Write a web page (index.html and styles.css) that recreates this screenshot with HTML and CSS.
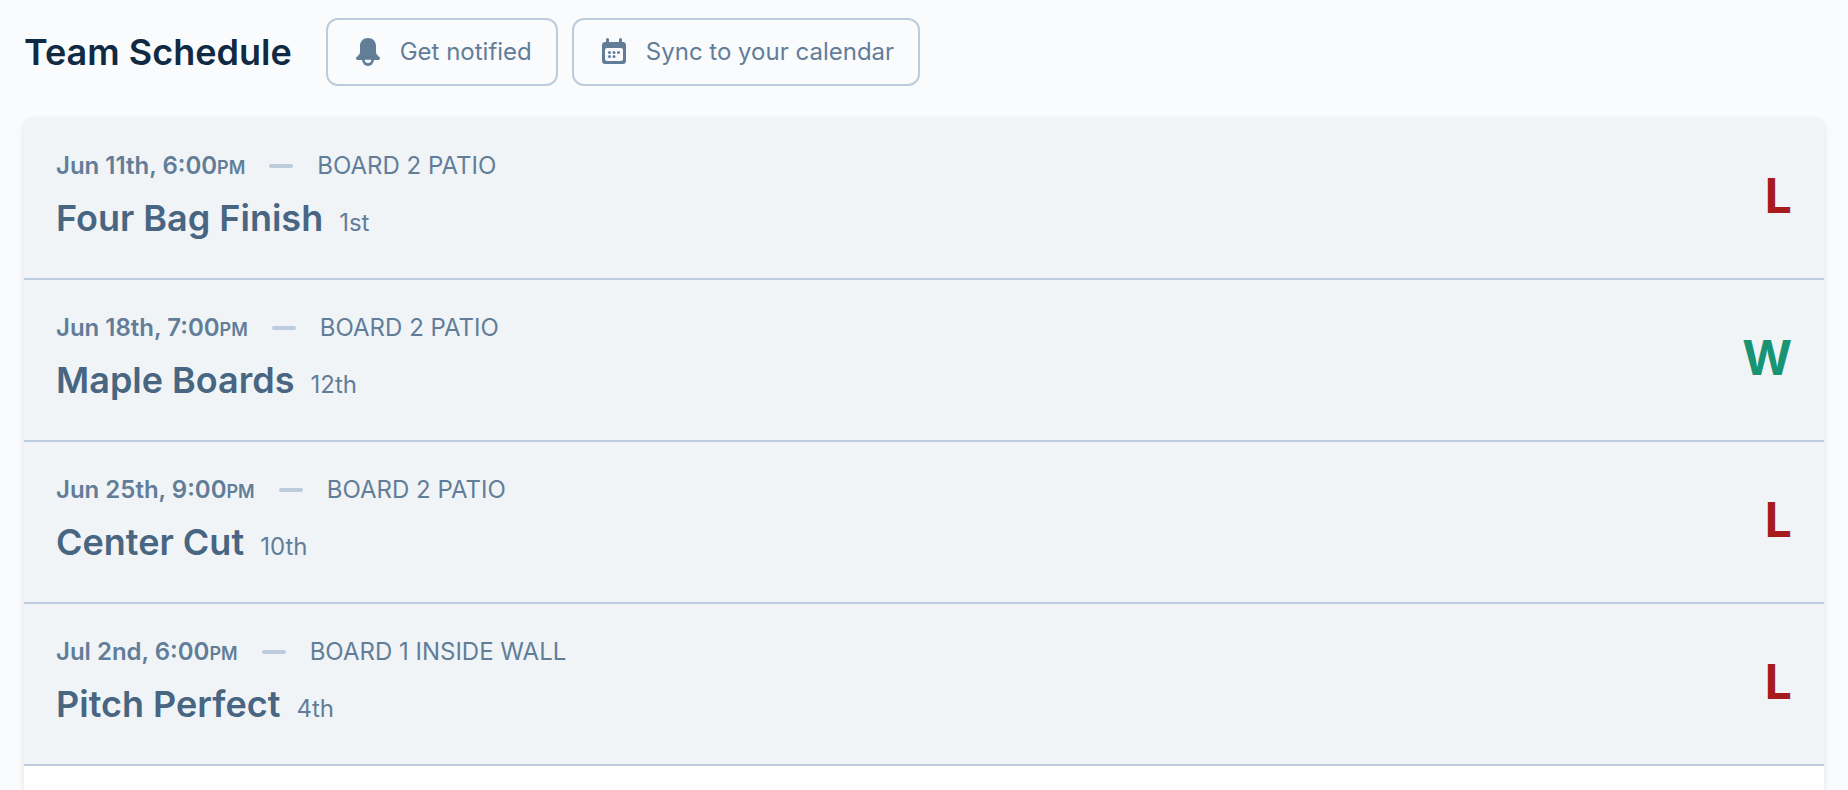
FILE: index.html
```html
<!DOCTYPE html>
<html lang="en">
<head>
    <meta charset="UTF-8">
    <meta name="viewport" content="width=device-width, initial-scale=1.0">
    <title>Team Schedule</title>
    <link rel="stylesheet" href="styles.css">
</head>
<body>
    <header class="schedule-header">
        <h1>Team Schedule</h1>
        <div class="actions">
            <button type="button" class="btn">
                <svg class="icon" viewBox="0 0 28 28" aria-hidden="true">
                    <path fill="currentColor" d="M14 0C9.300 0 6 3.400 6 8v5.500c0 1.900-.7 3-2.300 4.400C2.600 18.900 2 19.600 2 20.600 2 21.500 2.700 22 3.700 22h20.600c1 0 1.700-.5 1.700-1.400 0-1-.6-1.700-1.700-2.700C22.700 16.500 22 15.400 22 13.500V8c0-4.600-3.300-8-8-8z"/>
                    <circle fill="currentColor" cx="14" cy="22.200" r="5.800"/>
                    <path class="clapper" d="M10.700 21.800h6.600a3.300 3.300 0 0 1-6.600 0z"/>
                </svg>
                Get notified
            </button>
            <button type="button" class="btn">
                <svg class="icon" viewBox="0 0 28 28" aria-hidden="true">
                    <path fill="currentColor" fill-rule="evenodd" d="M6 1.500a1.500 1.500 0 0 1 3 0V4h10V1.500a1.500 1.500 0 0 1 3 0V4h1c1.700 0 3 1.300 3 3v16c0 1.700-1.300 3-3 3H5c-1.700 0-3-1.300-3-3V7c0-1.700 1.300-3 3-3h1zM7 10c-1.100 0-2 .9-2 2v9c0 1.100.9 2 2 2h14c1.100 0 2-.9 2-2v-9c0-1.100-.9-2-2-2z"/>
                    <g fill="currentColor">
                        <circle cx="9.500" cy="14.500" r="1.500"/>
                        <circle cx="14" cy="14.500" r="1.500"/>
                        <circle cx="18.500" cy="14.500" r="1.500"/>
                        <circle cx="9.500" cy="18.500" r="1.500"/>
                        <circle cx="14" cy="18.500" r="1.500"/>
                    </g>
                </svg>
                Sync to your calendar
            </button>
        </div>
    </header>

    <ul class="schedule">
        <li class="match">
            <div>
                <div class="match-info">
                    <span class="date">Jun 11th, 6:00<span class="ampm">PM</span></span>
                    <span class="dash"></span>
                    <span>BOARD 2 PATIO</span>
                </div>
                <div class="opponent">
                    <h2>Four Bag Finish</h2>
                    <span>1st</span>
                </div>
            </div>
            <span class="result loss">L</span>
        </li>
        <li class="match">
            <div>
                <div class="match-info">
                    <span class="date">Jun 18th, 7:00<span class="ampm">PM</span></span>
                    <span class="dash"></span>
                    <span>BOARD 2 PATIO</span>
                </div>
                <div class="opponent">
                    <h2>Maple Boards</h2>
                    <span>12th</span>
                </div>
            </div>
            <span class="result win">W</span>
        </li>
        <li class="match">
            <div>
                <div class="match-info">
                    <span class="date">Jun 25th, 9:00<span class="ampm">PM</span></span>
                    <span class="dash"></span>
                    <span>BOARD 2 PATIO</span>
                </div>
                <div class="opponent">
                    <h2>Center Cut</h2>
                    <span>10th</span>
                </div>
            </div>
            <span class="result loss">L</span>
        </li>
        <li class="match">
            <div>
                <div class="match-info">
                    <span class="date">Jul 2nd, 6:00<span class="ampm">PM</span></span>
                    <span class="dash"></span>
                    <span>BOARD 1 INSIDE WALL</span>
                </div>
                <div class="opponent">
                    <h2>Pitch Perfect</h2>
                    <span>4th</span>
                </div>
            </div>
            <span class="result loss">L</span>
        </li>
    </ul>
</body>
</html>
```

FILE: styles.css
```css
* {
    box-sizing: border-box;
}
body {
    display: flex;
    flex-direction: column;
    min-height: 100vh;
    margin: 0;
    padding: 18px 24px 0;
    background: #fafbfd;
    color: #627d98;
    font-family: Inter, "Liberation Sans", sans-serif;
    font-size: 24px;
    line-height: 32px;
}
h1, h2 {
    margin: 0;
    font-size: 36px;
    font-weight: 600;
    line-height: 48px;
}
h1 {
    color: #102a43;
}
h2 {
    color: #486581;
}
.schedule-header {
    display: flex;
    flex-wrap: wrap;
    align-items: center;
    gap: 34px;
    margin-bottom: 32px;
}
.actions {
    display: flex;
    flex-wrap: wrap;
    gap: 14px;
}
.btn {
    display: flex;
    align-items: center;
    gap: 18px;
    padding: 16px 24px 16px 26px;
    border: 2px solid #bcccdc;
    border-radius: 12px;
    background: #fafbfd;
    color: #627d98;
    font: inherit;
    cursor: pointer;
}
.icon {
    width: 28px;
    height: 28px;
}
.clapper {
    fill: #fafbfd;
}
.schedule {
    flex: 1;
    margin: 0;
    padding: 0;
    border-radius: 8px 8px 0 0;
    background: #fff;
    box-shadow: 0 2px 6px rgba(0, 0, 0, 0.1);
    list-style: none;
    overflow: hidden;
}
.match {
    display: flex;
    align-items: center;
    justify-content: space-between;
    padding: 32px 32px 36px;
    border-bottom: 2px solid #bcccdc;
    background: #f0f4f7;
}
.match-info {
    display: flex;
    align-items: center;
    gap: 24px;
    margin-bottom: 12px;
}
.date {
    font-weight: 600;
}
.ampm {
    font-size: 18px;
    line-height: 18px;
}
.dash {
    width: 24px;
    height: 4px;
    border-radius: 2px;
    background: #bcccdc;
}
.opponent {
    display: flex;
    align-items: baseline;
    gap: 16px;
}
.result {
    font-size: 48px;
    font-weight: 700;
    line-height: 48px;
}
.win {
    color: #199473;
}
.loss {
    color: #a61b1b;
}
```
